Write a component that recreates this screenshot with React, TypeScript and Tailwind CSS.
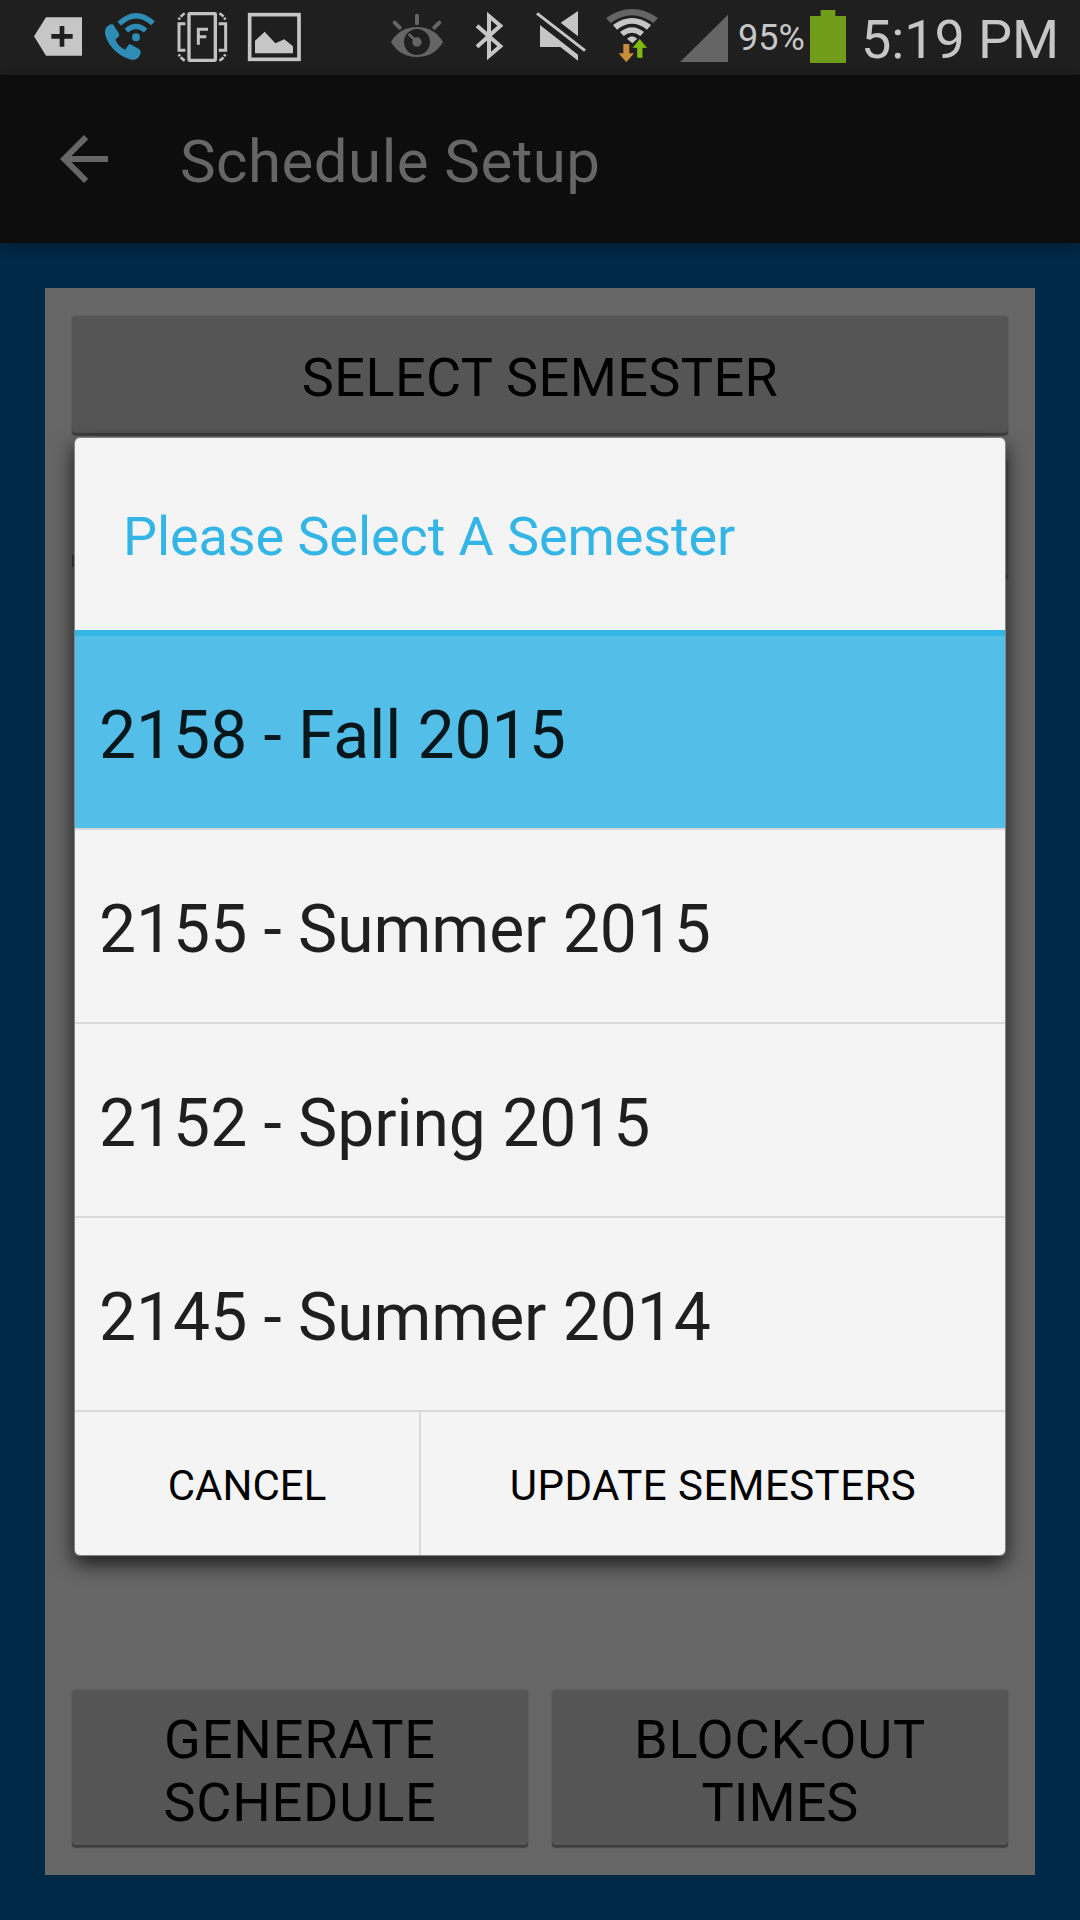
import type { ReactNode } from "react";

const semesters = [
  { label: "2158 - Fall 2015", selected: true },
  { label: "2155 - Summer 2015", selected: false },
  { label: "2152 - Spring 2015", selected: false },
  { label: "2145 - Summer 2014", selected: false },
];

function StatusIcon({ viewBox, className, children }: { viewBox: string; className: string; children: ReactNode }) {
  return (
    <svg viewBox={viewBox} className={`h-[75px] shrink-0 ${className}`} fill="none">
      {children}
    </svg>
  );
}

function StatusBar() {
  return (
    <div className="flex h-[75px] shrink-0 bg-[#1f1f1f] pl-8 text-[#c6c6c6]">
      {/* notification tag */}
      <StatusIcon viewBox="36 0 156 225" className="w-[52px]">
        <path d="M42 109 78 52H186V167H78Z" fill="#c6c6c6" />
        <path d="M126 78V140M94 109H158" stroke="#1f1f1f" strokeWidth="14" />
      </StatusIcon>
      {/* wifi calling */}
      <StatusIcon viewBox="249 0 162 225" className="ml-[19px] w-[54px]">
        <path
          d="M266 76C272 72 279 72 282 77L297 101C299 105 298 108 295 111L286 119C291 132 302 143 316 149L323 138C326 133 330 132 334 134L357 147C363 151 363 158 360 165C355 176 345 181 336 179C299 171 260 137 255 98C254 88 259 80 266 76Z"
          fill="#2e8db5"
        />
        <path d="M298 71Q348 24 399 70" stroke="#2e8db5" strokeWidth="16" />
        <path d="M319 92Q348 66 377 92" stroke="#2e8db5" strokeWidth="15" />
        <circle cx="348" cy="112" r="12" fill="#2e8db5" />
      </StatusIcon>
      {/* vibrate / flash */}
      <StatusIcon viewBox="465 0 162 225" className="ml-[18px] w-[54px]">
        <g stroke="#c2c2c2">
          <rect x="507" y="41" width="79" height="140" rx="2" strokeWidth="10" />
          <path d="M496 71H477V151H496M596 71H617V151H596" strokeWidth="9" />
          <path d="M494 40Q484 46 476 59M598 40Q610 46 616 59M494 182Q484 176 476 163M598 182Q610 176 616 163" strokeWidth="8" strokeDasharray="16 4" />
          <path d="M535 134V88H564M535 110H559" strokeWidth="9" />
        </g>
      </StatusIcon>
      {/* picture */}
      <StatusIcon viewBox="678 0 168 225" className="ml-[17px] w-[56px]">
        <rect x="689" y="44" width="148" height="134" stroke="#c6c6c6" strokeWidth="11" />
        <path d="M705 160V122L734 95 766 130 793 118 819 139V160Z" fill="#c6c6c6" />
      </StatusIcon>
      {/* smart stay eye */}
      <StatusIcon viewBox="57 0 168 225" className="ml-[87px] w-[56px]">
        <path d="M63 126C80 96 108 81 141 81S202 96 219 126C202 156 174 171 141 171S80 156 63 126Z" fill="#656565" />
        <circle cx="141" cy="126" r="39" fill="#1f1f1f" />
        <circle cx="141" cy="126" r="14" fill="#656565" />
        <path d="M116 102 134 119" stroke="#656565" strokeWidth="8" />
        <path d="M141 47V70M74 68 89 83M208 68 193 83" stroke="#656565" strokeWidth="12" strokeLinecap="round" />
      </StatusIcon>
      {/* bluetooth */}
      <StatusIcon viewBox="312 0 93 225" className="ml-[29px] w-[31px]">
        <path d="M321 77 391 139 357 168V48L391 77 321 140" stroke="#c6c6c6" strokeWidth="12" />
      </StatusIcon>
      {/* muted speaker */}
      <StatusIcon viewBox="492 0 159 225" className="ml-[29px] w-[53px]">
        <path d="M624 33V109L572 68Z" fill="#c6c6c6" />
        <path d="M510 75 624 164V182L571 141H510Z" fill="#c6c6c6" />
        <path d="M501 40 645 152" stroke="#c6c6c6" strokeWidth="9" />
      </StatusIcon>
      {/* wifi with traffic arrows */}
      <StatusIcon viewBox="705 0 162 225" className="ml-[18px] w-[54px]">
        <path d="M708 54Q786 0 864 54L850 69Q786 22 722 69Z" fill="#656565" />
        <path d="M729 75Q786 33 843 75L831 89Q786 54 741 89Z" fill="#c6c6c6" />
        <path d="M750 96Q786 67 822 96L811 108Q786 88 761 108Z" fill="#c6c6c6" />
        <path d="M771 116Q786 101 802 116L787 130Z" fill="#c6c6c6" />
        <path d="M760 132H778V160H792L769 187 746 160H760Z" fill="#c98d3c" />
        <path d="M801 174H818V144H832L809 116 787 144H801Z" fill="#7fb811" stroke="#1f1f1f" strokeWidth="1" />
      </StatusIcon>
      {/* signal */}
      <StatusIcon viewBox="57 0 150 225" className="ml-5 w-[50px]">
        <path d="M60 186 204 44V186Z" fill="#656565" />
      </StatusIcon>
      <span className="ml-[9px] w-[72px] shrink-0 whitespace-nowrap pt-px text-[36px] leading-[75px]">95%</span>
      {/* battery */}
      <StatusIcon viewBox="450 0 108 225" className="w-9">
        <path d="M450 48H482V30H526V48H558V189H450Z" fill="#709c1a" />
      </StatusIcon>
      <span className="ml-[15px] whitespace-nowrap pt-[2px] text-[54px] leading-[75px] tracking-[-0.1px]">5:19 PM</span>
    </div>
  );
}

function RaisedButton({ className, children }: { className: string; children?: ReactNode }) {
  return (
    <button
      className={`flex flex-col items-center justify-center rounded-[4px] bg-[#555555] pt-[5px] text-center text-[54px] leading-[63px] text-black shadow-[0_0_2px_#505050,0_1px_1px_#484848,inset_0_-2px_0_#3c3c3c] ${className}`}
    >
      {children}
    </button>
  );
}

function SemesterDialog() {
  return (
    <div className="absolute top-[438px] left-[75px] flex h-[1117px] w-[930px] flex-col rounded-[5px] bg-[#f4f4f4] shadow-[0_0_1px_1px_#8a8a8a,0_8px_20px_1px_rgba(0,0,0,0.75)]">
      <h2 className="flex h-[192px] shrink-0 items-center pt-[5px] pl-12 text-[54px] tracking-[-0.1px] text-[#33b5e5]">
        Please Select A Semester
      </h2>
      <div className="h-[6px] shrink-0 bg-[#33b5e5]" />
      <ul>
        {semesters.map((s) => (
          <li
            key={s.label}
            className={`flex h-[194px] items-center border-b-2 border-[#dadada] pt-[7px] pl-6 text-[66px] tracking-[-0.05px] ${s.selected ? "bg-[#53bfe8] text-[#08171c]" : "text-[#1f1f1f]"}`}
          >
            {s.label}
          </li>
        ))}
      </ul>
      <div className="flex flex-1 text-[42px] text-black">
        <button className="w-[346px] border-r-2 border-[#dadada] pt-[3px]">CANCEL</button>
        <button className="flex-1 pt-[3px] tracking-[0.47px]">UPDATE SEMESTERS</button>
      </div>
    </div>
  );
}

export default function App() {
  return (
    <div className="relative flex h-[1920px] w-[1080px] flex-col overflow-hidden bg-[#002847] font-['Roboto',sans-serif]">
      <StatusBar />
      <header className="flex h-[168px] shrink-0 items-center bg-[#0d0d0d] pl-12 text-[#666666] shadow-[0_2px_14px_rgba(0,0,0,0.35)]">
        <svg viewBox="0 0 24 24" className="size-[72px]" fill="currentColor">
          <path d="M20 11H7.830l5.590-5.590L12 4l-8 8 8 8 1.410-1.410L7.830 13H20v-2z" />
        </svg>
        <h1 className="pt-[5px] pl-[60px] text-[60px] tracking-[0.47px]">Schedule Setup</h1>
      </header>
      <main className="mx-[45px] mt-[45px] flex h-[1587px] flex-col bg-[#666666] px-[27px] pt-[28px] pb-[28px]">
        <RaisedButton className="h-[119px]">
          <span className="-mt-[2px] tracking-[0.4px]">SELECT SEMESTER</span>
        </RaisedButton>
        <div className="mt-[25px] flex h-[119px]">
          <div className="mb-3 h-3 w-2 self-end bg-[#3c3c3c]" />
          <RaisedButton className="flex-1" />
        </div>
        <div className="mt-auto grid grid-cols-2 gap-6">
          <RaisedButton className="h-[157px]">
            <span className="tracking-[0.9px]">GENERATE</span>
            <span className="tracking-[0.8px]">SCHEDULE</span>
          </RaisedButton>
          <RaisedButton className="h-[157px]">
            <span className="tracking-[0.8px]">BLOCK-OUT</span>
            <span>TIMES</span>
          </RaisedButton>
        </div>
      </main>
      <SemesterDialog />
    </div>
  );
}
